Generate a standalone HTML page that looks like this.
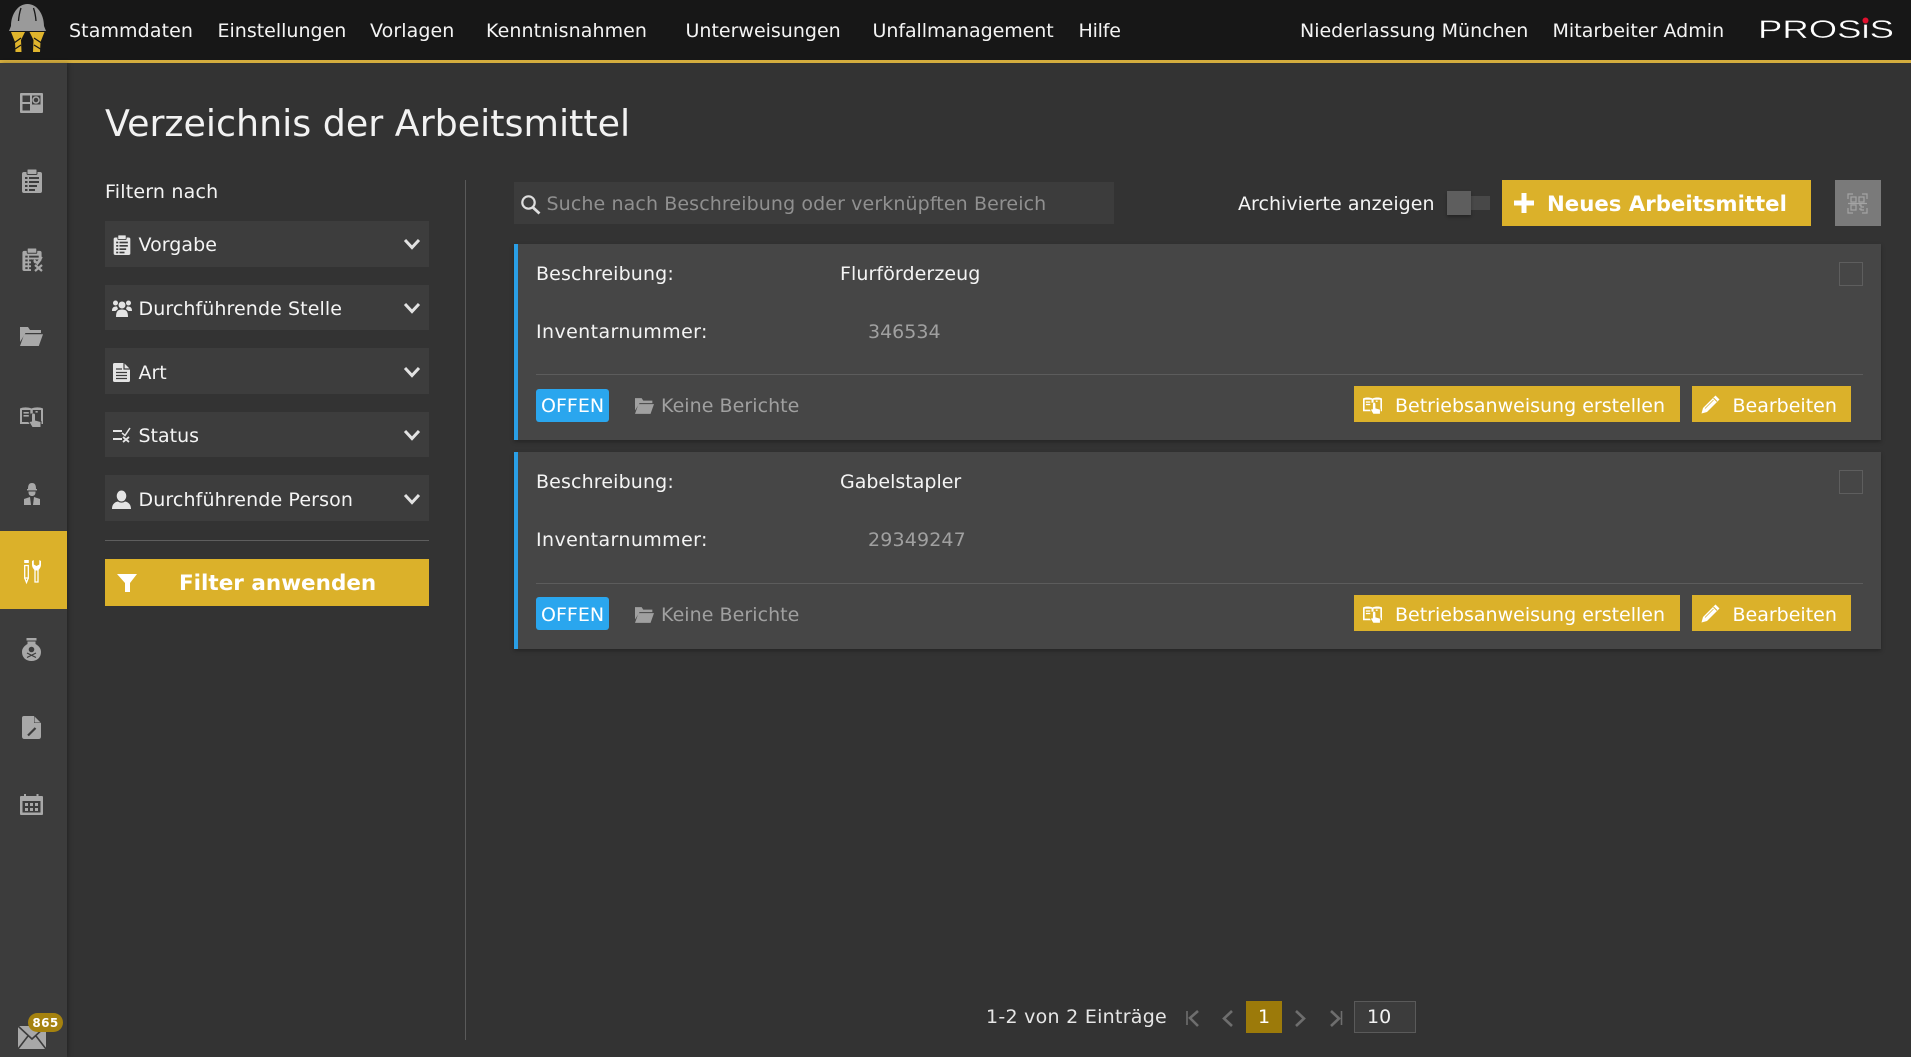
<!DOCTYPE html>
<html lang="de">
<head>
<meta charset="utf-8">
<title>Verzeichnis der Arbeitsmittel</title>
<style>
html,body{margin:0;padding:0;width:1911px;height:1057px;overflow:hidden;background:#333;}
body{position:relative;font-family:"DejaVu Sans","Liberation Sans",sans-serif;color:#f2f2f2;font-size:19px;}
.b{position:absolute;}
.t{position:absolute;white-space:nowrap;line-height:24px;}
.nav{font-size:19px;top:19px;color:#f4f4f4;}
.lb{color:#f4f4f4;}
.gr{color:#a0a0a0;}
.f{position:absolute;left:105px;width:324px;height:46px;background:#3d3d3d;}
.gold{position:absolute;background:#dbb12a;}
.bd{font-weight:bold;color:#fff;font-size:21.3px;}
.card{position:absolute;left:514px;width:1367px;height:196px;background:#464646;border-left:4px solid #2a9fe6;box-sizing:border-box;box-shadow:0 2px 4px rgba(0,0,0,.28);}
.sep{position:absolute;left:536px;width:1327px;height:1px;background:#5c5c5c;}
.chk{position:absolute;left:1839px;width:22px;height:22px;border:1px solid #5e5e5e;}
.badge{position:absolute;left:536px;width:73px;height:33px;border-radius:3px;background:#2aa6ee;}
.cut{fill:var(--c);}
.scut{stroke:var(--c);fill:none;}
svg{position:absolute;left:0;top:0;}
.inv{letter-spacing:.4px;}
.bes{letter-spacing:.14px;}
</style>
</head>
<body>
<!-- backgrounds -->
<div class="b" style="left:0;top:0;width:1911px;height:60px;background:#171717;"></div>
<div class="b" style="left:0;top:60px;width:1911px;height:3px;background:#d4ad3e;"></div>
<div class="b" style="left:0;top:63px;width:67px;height:994px;background:#3c3c3c;box-shadow:2px 0 4px rgba(0,0,0,.25);"></div>
<div class="gold" style="left:0;top:531px;width:67px;height:78px;"></div>

<!-- nav -->
<div class="t nav" style="left:69px;letter-spacing:.1px;">Stammdaten</div>
<div class="t nav" style="left:217.500px;">Einstellungen</div>
<div class="t nav" style="left:370px;letter-spacing:.09px;">Vorlagen</div>
<div class="t nav" style="left:486px;letter-spacing:.08px;">Kenntnisnahmen</div>
<div class="t nav" style="left:685.500px;">Unterweisungen</div>
<div class="t nav" style="left:872.500px;letter-spacing:-.06px;">Unfallmanagement</div>
<div class="t nav" style="left:1078.500px;letter-spacing:-.2px;">Hilfe</div>
<div class="t nav" style="left:1300px;">Niederlassung München</div>
<div class="t nav" style="left:1552.500px;letter-spacing:.03px;">Mitarbeiter Admin</div>

<!-- title & filter column -->
<div class="t" style="left:105px;top:102px;font-size:36.4px;line-height:44px;color:#f2f2f2;">Verzeichnis der Arbeitsmittel</div>
<div class="t lb" style="left:105px;top:180px;letter-spacing:.2px;">Filtern nach</div>
<div class="f" style="top:221px;"></div>
<div class="f" style="top:285px;height:45px;"></div>
<div class="f" style="top:348px;"></div>
<div class="f" style="top:412px;height:45px;"></div>
<div class="f" style="top:475px;"></div>
<div class="t lb" style="left:138.5px;top:233px;letter-spacing:.05px;">Vorgabe</div>
<div class="t lb" style="left:138.5px;top:297px;letter-spacing:.09px;">Durchführende Stelle</div>
<div class="t lb" style="left:138.5px;top:361px;">Art</div>
<div class="t lb" style="left:138.5px;top:424px;">Status</div>
<div class="t lb" style="left:138.5px;top:488px;letter-spacing:.12px;">Durchführende Person</div>
<div class="b" style="left:105px;top:540px;width:324px;height:1px;background:#5e5e5e;"></div>
<div class="gold" style="left:105px;top:559px;width:324px;height:47px;"></div>
<div class="t bd" style="left:179px;top:572px;font-size:21.5px;">Filter anwenden</div>
<div class="b" style="left:465px;top:180px;width:1px;height:860px;background:#5a5a5a;"></div>

<!-- toolbar -->
<div class="b" style="left:514px;top:182px;width:600px;height:42px;background:#3c3c3c;"></div>
<div class="t" style="left:546.500px;top:192px;color:#909090;letter-spacing:.11px;">Suche nach Beschreibung oder verknüpften Bereich</div>
<div class="t lb" style="left:1238px;top:192px;letter-spacing:.04px;">Archivierte anzeigen</div>
<div class="b" style="left:1447px;top:196px;width:43px;height:14px;background:#484848;"></div>
<div class="b" style="left:1447px;top:191px;width:24px;height:24px;background:#5e5e5e;box-shadow:0 2px 3px rgba(0,0,0,.3);"></div>
<div class="gold" style="left:1502px;top:180px;width:309px;height:46px;"></div>
<div class="t bd" style="left:1547px;top:193px;font-size:21.25px;">Neues Arbeitsmittel</div>
<div class="b" style="left:1835px;top:180px;width:46px;height:46px;background:#7a7a7a;"></div>

<!-- card 1 -->
<div class="card" style="top:244px;"></div>
<div class="t lb bes" style="left:536px;top:262px;">Beschreibung:</div>
<div class="t lb" style="left:840px;top:262px;letter-spacing:.09px;">Flurförderzeug</div>
<div class="t lb inv" style="left:536px;top:320px;">Inventarnummer:</div>
<div class="t gr" style="left:868px;top:320px;">346534</div>
<div class="chk" style="top:262px;"></div>
<div class="sep" style="top:374px;"></div>
<div class="badge" style="top:389px;"></div>
<div class="t" style="left:541px;top:394px;color:#fff;">OFFEN</div>
<div class="t gr" style="left:661px;top:394px;letter-spacing:.05px;">Keine Berichte</div>
<div class="gold" style="left:1354px;top:386px;width:326px;height:36px;"></div>
<div class="t" style="left:1395px;top:394px;color:#fff;">Betriebsanweisung erstellen</div>
<div class="gold" style="left:1692px;top:386px;width:159px;height:36px;"></div>
<div class="t" style="left:1732.500px;top:394px;color:#fff;">Bearbeiten</div>

<!-- card 2 -->
<div class="card" style="top:452px;height:197px;"></div>
<div class="t lb bes" style="left:536px;top:470px;">Beschreibung:</div>
<div class="t lb" style="left:840px;top:470px;">Gabelstapler</div>
<div class="t lb inv" style="left:536px;top:528px;">Inventarnummer:</div>
<div class="t gr" style="left:868px;top:528px;letter-spacing:.15px;">29349247</div>
<div class="chk" style="top:470px;"></div>
<div class="sep" style="top:583px;"></div>
<div class="badge" style="top:597px;"></div>
<div class="t" style="left:541px;top:603px;color:#fff;">OFFEN</div>
<div class="t gr" style="left:661px;top:603px;letter-spacing:.05px;">Keine Berichte</div>
<div class="gold" style="left:1354px;top:595px;width:326px;height:36px;"></div>
<div class="t" style="left:1395px;top:603px;color:#fff;">Betriebsanweisung erstellen</div>
<div class="gold" style="left:1692px;top:595px;width:159px;height:36px;"></div>
<div class="t" style="left:1732.500px;top:603px;color:#fff;">Bearbeiten</div>

<!-- pagination -->
<div class="t" style="left:986px;top:1005px;color:#e6e6e6;letter-spacing:.27px;">1-2 von 2 Einträge</div>
<div class="b" style="left:1246px;top:1001px;width:36px;height:32px;background:#9c7a0a;"></div>
<div class="t" style="left:1246px;width:36px;text-align:center;top:1005px;color:#fff;">1</div>
<div class="b" style="left:1354px;top:1001px;width:60px;height:30px;background:#3c3c3c;border:1px solid #5a5a5a;"></div>
<div class="t" style="left:1367px;top:1005px;color:#f2f2f2;">10</div>

<svg width="1911" height="1057" viewBox="0 0 1911 1057" xmlns="http://www.w3.org/2000/svg">
<defs>
<symbol id="clip" viewBox="0 0 20 24">
  <rect x="0" y="3" width="20" height="21" rx="2" fill="currentColor"/>
  <rect x="5" y="0" width="10" height="5.5" rx="1" class="scut" style="fill:currentColor;stroke-width:1"/>
  <g class="cut">
    <rect x="3" y="8" width="2.5" height="2"/><rect x="7" y="8" width="10" height="2"/>
    <rect x="3" y="12" width="2.5" height="2"/><rect x="7" y="12" width="10" height="2"/>
    <rect x="3" y="16" width="2.5" height="2"/><rect x="7" y="16" width="8" height="2"/>
    <rect x="3" y="20" width="2.5" height="2"/><rect x="7" y="20" width="6" height="2"/>
  </g>
</symbol>
<symbol id="book" viewBox="0 0 23 20">
  <path d="M0 1.5C3 0 8 0 11.5 1.5 15 0 20 0 23 1.5V17H0Z" fill="currentColor"/>
  <g class="cut">
    <rect x="2" y="3" width="8.3" height="12"/>
    <rect x="12.8" y="3" width="8.2" height="12"/>
  </g>
  <g fill="currentColor">
    <rect x="3.5" y="5" width="5.3" height="1.6"/><rect x="3.5" y="8" width="5.3" height="1.6"/>
    <rect x="15.5" y="4" width="2.2" height="1.6"/>
  </g>
  <path d="M10.500 6.500H16V12.500L21.500 14V20H11.500L8 14.500Z" class="cut"/>
  <path d="M12 8a1.500 1.500 0 0 1 3 0V13.500L20.500 15V20H12.500L9.500 15 12 14.500Z" fill="currentColor"/>
</symbol>
<symbol id="folder" viewBox="0 0 23 19">
  <path d="M0 0H8L10 3H21V6H5.5L0 15Z" fill="currentColor"/>
  <path d="M4.2 7.3H23L18.8 19H0Z" fill="currentColor"/>
</symbol>
<symbol id="pen" viewBox="0 0 19 19">
  <path d="M14.500 .5 18.500 4.500 6 17 .5 18.500 2 13Z" fill="#fff"/>
  <path d="M12.500 3 16 6.500" stroke="#dbb12a" stroke-width="1"/>
  <path d="M4 13.500 12.500 5" stroke="#dbb12a" stroke-width=".7"/>
</symbol>
</defs>

<!-- logo helmet -->
<path d="M9 31 11 26C11 14 18 4 27.500 4 37 4 44 14 44 26L46 31Z" fill="#9a9a9a"/>
<path d="M21 8Q19 14 18.500 21M33.500 8Q35.500 14 36 21" fill="none" stroke="#171717" stroke-width="1.300"/>
<path d="M11 32H25L21 40 21.500 52H15.500L15 42Z" fill="#e0b52d"/>
<path d="M44.500 32H29.500L33.500 40 33 52H40L40.500 42Z" fill="#e0b52d"/>
<path d="M14 43 21 38M15 49 21 45M41.500 43 34 38M40.500 49 34 45" stroke="#171717" stroke-width="1.200"/>

<!-- PROSIS logo as live text -->
<text x="1758" y="38" font-family="'Liberation Sans',sans-serif" font-size="25" fill="#fff" stroke="#171717" stroke-width=".35" textLength="136" lengthAdjust="spacingAndGlyphs">PROSiS</text>
<circle cx="1865.500" cy="20.500" r="3" fill="#e0102e"/>

<!-- sidebar icons -->
<g color="#a8a8a8" style="--c:#3c3c3c">
  <rect x="20" y="93" width="23" height="20" rx="1" fill="currentColor"/>
  <rect x="22.500" y="95.500" width="7.500" height="6.500" fill="#3c3c3c"/>
  <rect x="22.500" y="104" width="7.500" height="6.500" fill="#3c3c3c"/>
  <rect x="32" y="95.500" width="8.500" height="9" fill="#3c3c3c"/>
  <circle cx="36" cy="100" r="3" fill="none" stroke="#a8a8a8" stroke-width="1.500"/>
  <use href="#clip" x="22" y="169" width="20" height="24"/>
  <use href="#clip" x="22" y="248" width="20" height="23"/>
  <path d="M31 259 37 266 44 257V272H31Z" fill="#3c3c3c"/>
  <path d="M34 260 37 263 42 257" fill="none" stroke="#a8a8a8" stroke-width="2"/>
  <path d="M35 265 42 271M42 265 35 271" stroke="#a8a8a8" stroke-width="2.200"/>
  <use href="#folder" x="20" y="327" width="23" height="19"/>
  <use href="#book" x="20" y="407" width="23" height="20"/>
  <!-- worker -->
  <path d="M28 489C28 485 29 483 32 483S36 485 36 489Z" fill="#a8a8a8"/>
  <rect x="27" y="489" width="10" height="1.400" fill="#a8a8a8"/>
  <path d="M28.500 491.500H35.500V492C35.500 495 34 496 32 496S28.500 495 28.500 492Z" fill="#a8a8a8"/>
  <path d="M24 505V499L30 497 31 505ZM40 505V499L34 497 33 505Z" fill="#a8a8a8"/>
  <!-- tools active -->
  <g fill="none" stroke="#fff" stroke-width="1.300">
    <rect x="24.700" y="565.500" width="3.600" height="12.500"/>
    <path d="M24.700 578 26.500 582.500 28.300 578"/>
    <path d="M35 570V582H38V570"/>
  </g>
  <rect x="24.200" y="560" width="4.600" height="3" fill="#fff"/>
  <path d="M32 561V564.500C32 567.500 34 569.500 35 570.500H38C39 569.500 41 567.500 41 564.500V561L39.300 560V564.500L36.500 566 33.800 564.500V560Z" fill="#fff"/>
  <!-- bottle -->
  <rect x="26.500" y="638" width="10" height="2.500" fill="#a8a8a8"/>
  <path d="M27.500 641.500H35.500V644C39 646 41 648.500 41 652 41 657.500 37 661 31.500 661S22 657.500 22 652C22 648.500 24 646 27.500 644Z" fill="#a8a8a8"/>
  <circle cx="31.500" cy="649.500" r="2.800" fill="#3c3c3c"/>
  <path d="M27 653 36 657.500M36 653 27 657.500" stroke="#3c3c3c" stroke-width="1.200"/>
  <!-- doc pencil -->
  <path d="M24 716H34L41 723V736.500Q41 739 38.500 739H24.500Q22 739 22 736.500V718Q22 716 24 716Z" fill="#a8a8a8"/>
  <path d="M34 716V723H41Z" fill="#3c3c3c"/>
  <path d="M34.500 716.500 40.500 722.500H34.500Z" fill="#a8a8a8"/>
  <path d="M28 735.500 35.500 728" stroke="#3c3c3c" stroke-width="2.200"/>
  <!-- calendar -->
  <rect x="20" y="796" width="23" height="19" rx="1" fill="#a8a8a8"/>
  <rect x="24" y="794" width="2" height="4" fill="#a8a8a8"/><rect x="36.500" y="794" width="2" height="4" fill="#a8a8a8"/>
  <rect x="22.500" y="801" width="18" height="11.500" fill="#3c3c3c"/>
  <g fill="#a8a8a8">
    <rect x="25" y="803" width="3" height="3"/><rect x="30" y="803" width="3" height="3"/><rect x="35" y="803" width="3" height="3"/>
    <rect x="25" y="808" width="3" height="3"/><rect x="30" y="808" width="3" height="3"/><rect x="35" y="808" width="3" height="3"/>
  </g>
  <!-- mail -->
  <rect x="18" y="1026" width="28" height="23" fill="#a8a8a8"/>
  <path d="M18 1026 32 1039 46 1026M18 1049 28 1036M46 1049 36 1036" fill="none" stroke="#3c3c3c" stroke-width="1.600"/>
  <rect x="28" y="1013" width="35" height="19" rx="9.500" fill="#a5820f"/>
</g>
<text x="45.500" y="1027" text-anchor="middle" font-family="'DejaVu Sans',sans-serif" font-size="12" font-weight="bold" fill="#fff" letter-spacing=".4">865</text>

<!-- filter icons -->
<g color="#e4e4e4" style="--c:#3d3d3d">
  <use href="#clip" x="113" y="235" width="18" height="20"/>
  <circle cx="122" cy="305" r="3.500" fill="#e4e4e4"/>
  <circle cx="115.500" cy="303" r="2.500" fill="#e4e4e4"/><circle cx="128.500" cy="303" r="2.500" fill="#e4e4e4"/>
  <path d="M112 311C112 307 114 306.500 117 306.500L118 309 115.500 311ZM132 311C132 307 130 306.500 127 306.500L126 309 128.500 311Z" fill="#e4e4e4"/>
  <path d="M116 317C116 311 118 309.500 122 309.500S128 311 128 317Z" fill="#e4e4e4"/>
  <path d="M114.500 363H124L130 369V380.500Q130 382 128.500 382H114.500Q113 382 113 380.500V364.500Q113 363 114.500 363Z" fill="#e4e4e4"/>
  <path d="M124 363V369H130" fill="none" stroke="#3d3d3d" stroke-width="1.200"/>
  <path d="M116 369H122M116 372.500H127M116 375.500H127M116 378.500H127" stroke="#3d3d3d" stroke-width="1.300"/>
  <path d="M113 431H122M113 439H122" stroke="#e4e4e4" stroke-width="2"/>
  <path d="M122 433 125 435.500 130 428" fill="none" stroke="#e4e4e4" stroke-width="1.500"/>
  <path d="M123 437 129 442M129 437 123 442" stroke="#e4e4e4" stroke-width="1.800"/>
  <ellipse cx="121.500" cy="496" rx="4.800" ry="5.500" fill="#e4e4e4"/>
  <path d="M112 509C112 504 115 502 118 501.500 120 503 123 503 125 501.500 128 502 131 504 131 509Z" fill="#e4e4e4"/>
</g>
<g fill="none" stroke="#e2e2e2" stroke-width="3">
  <path d="M405 240 412 247.500 419 240"/>
  <path d="M405 304 412 311.500 419 304"/>
  <path d="M405 368 412 375.500 419 368"/>
  <path d="M405 431 412 438.500 419 431"/>
  <path d="M405 495 412 502.500 419 495"/>
</g>
<path d="M117 574H137L130 583V592H125V583Z" fill="#fff"/>
<circle cx="528.500" cy="202.500" r="6.200" fill="none" stroke="#dedede" stroke-width="2.200"/>
<path d="M533 207.500 539.500 213.500" stroke="#dedede" stroke-width="2.800"/>
<path d="M1514 203H1534M1524 193V213" stroke="#fff" stroke-width="5"/>
<g fill="none" stroke="#a4a4a4" stroke-width="1.200">
  <path d="M1848 199V194H1853M1862 194H1867V199M1848 208V213H1853M1862 213H1867V208"/>
  <rect x="1851" y="197" width="5" height="5"/><rect x="1859" y="197" width="5" height="5"/>
  <rect x="1851" y="205" width="5" height="5"/><path d="M1859 205h2v2h3M1859 209h2v1h3"/>
  <path d="M1848 203.500H1867"/>
</g>
<g color="#a0a0a0">
  <use href="#folder" x="635" y="398" width="19" height="16"/>
  <use href="#folder" x="635" y="607" width="19" height="16"/>
</g>
<g color="#fff" style="--c:#dbb12a">
  <use href="#book" x="1363" y="397" width="19" height="17"/>
  <use href="#book" x="1363" y="606" width="19" height="17"/>
  <use href="#pen" x="1701" y="395" width="19" height="19"/>
  <use href="#pen" x="1701" y="604" width="19" height="19"/>
</g>
<g fill="none" stroke="#6e6e6e" stroke-width="2.600">
  <path d="M1198 1011 1190 1018 1198 1026"/><path d="M1187 1011V1025" stroke-width="1.600"/>
  <path d="M1232 1011 1224 1018.500 1232 1026"/>
  <path d="M1296 1011 1304 1018.500 1296 1026"/>
  <path d="M1331 1011 1339 1018.500 1331 1026"/><path d="M1341.500 1011V1025" stroke-width="1.600"/>
</g>
</svg>
</body>
</html>
